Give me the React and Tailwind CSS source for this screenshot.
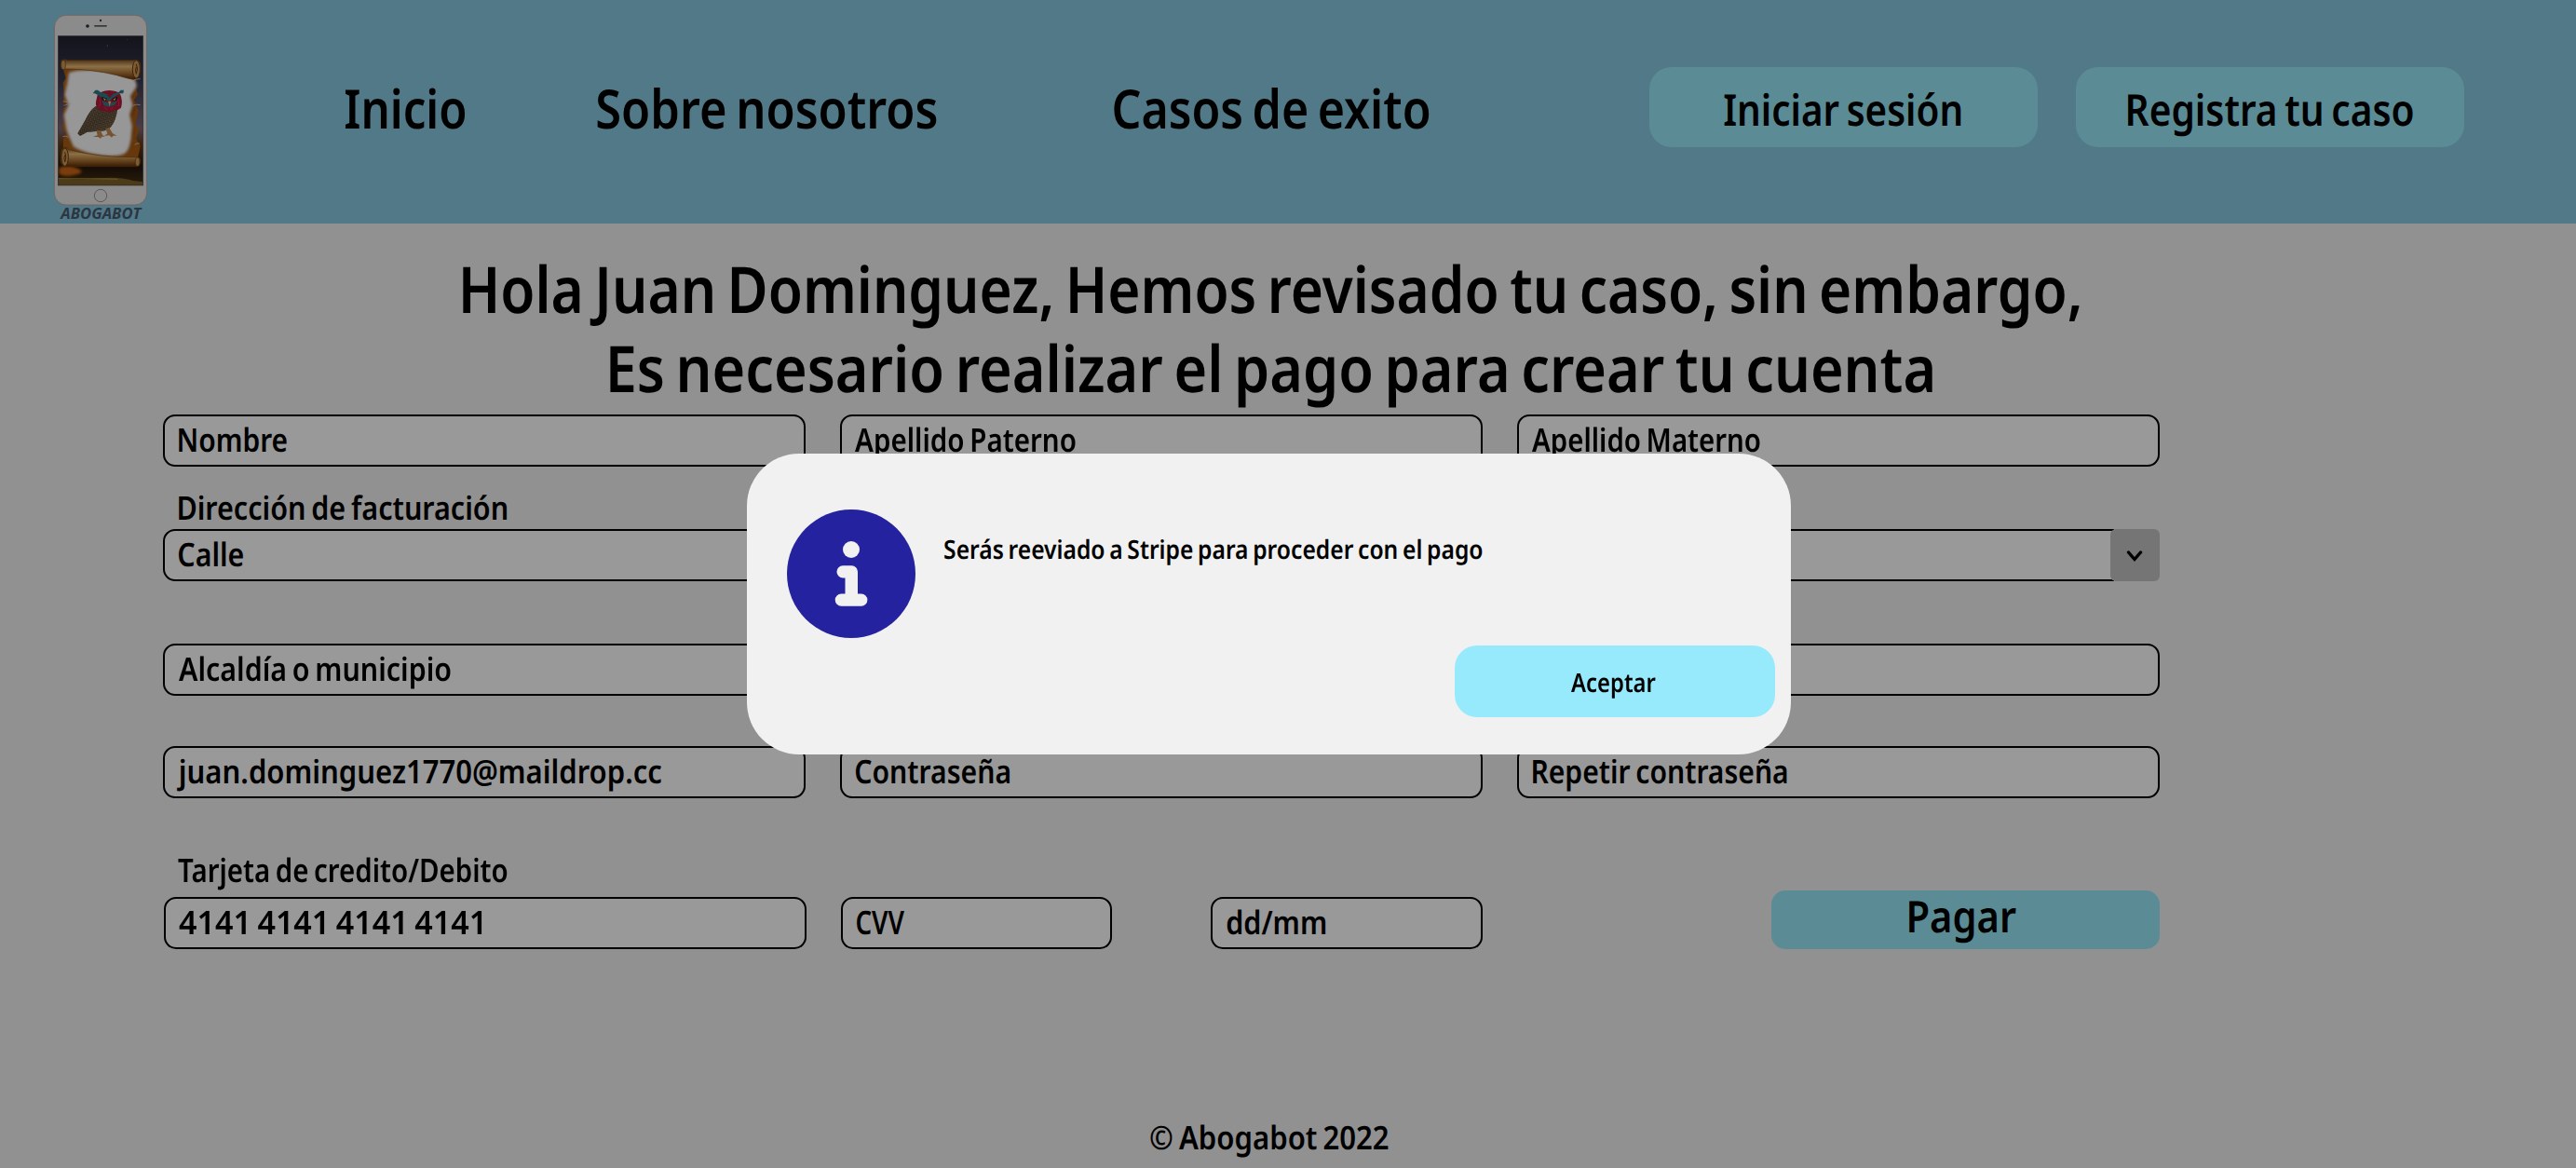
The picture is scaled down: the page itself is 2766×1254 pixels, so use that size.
import { useLayoutEffect, useRef } from "react";

const FAMILY = '"Noto Sans"';

// Condensed text: squeezes the glyphs so the drawn ink spans exactly `w` pixels.
function Fit({ w, className = "", children }) {
  const ref = useRef(null);
  useLayoutEffect(() => {
    const el = ref.current;
    const cs = getComputedStyle(el);
    const ctx = document.createElement("canvas").getContext("2d");
    ctx.font = `${cs.fontStyle} ${cs.fontWeight} ${cs.fontSize} ${FAMILY}`;
    ctx.textRendering = "geometricPrecision";
    const m = ctx.measureText(children);
    const left = m.actualBoundingBoxLeft;
    const bearings = m.width - left - m.actualBoundingBoxRight;
    const s = w / (el.offsetWidth - bearings);
    el.style.transform = `translateX(${left * s}px) scaleX(${s})`;
  }, [w, children]);
  return (
    <span className={"block shrink-0 " + className} style={{ width: w }}>
      <span ref={ref} className="inline-block origin-left whitespace-nowrap [text-rendering:geometricPrecision] [word-spacing:-0.07em]">
        {children}
      </span>
    </span>
  );
}

function Field({ text, w, className = "w-[690px]", pad = "pl-[15px]" }) {
  return (
    <div className={`flex h-14 shrink-0 items-center rounded-[13px] border-2 border-black bg-[#999999] pb-[2px] text-[35px] leading-[40px] ${pad} ${className}`}>
      {text ? <Fit w={w}>{text}</Fit> : null}
    </div>
  );
}

function Logo() {
  return (
    <svg width="140" height="240" viewBox="0 0 420 720" className="block shrink-0">
      <defs>
        <linearGradient id="sky" x1="0" y1="0" x2="0" y2="1">
          <stop offset="0" stopColor="#14141d" />
          <stop offset="0.3" stopColor="#22222f" />
          <stop offset="0.62" stopColor="#4a3c44" />
          <stop offset="0.72" stopColor="#3e230c" />
          <stop offset="0.88" stopColor="#150d06" />
          <stop offset="1" stopColor="#2a1d0c" />
        </linearGradient>
        <linearGradient id="roll" x1="0" y1="0" x2="0" y2="1">
          <stop offset="0" stopColor="#4b2f12" />
          <stop offset="0.35" stopColor="#8c7048" />
          <stop offset="0.65" stopColor="#6b4a22" />
          <stop offset="1" stopColor="#3a1c05" />
        </linearGradient>
        <linearGradient id="body" x1="0" y1="0" x2="1" y2="1">
          <stop offset="0" stopColor="#4d4033" />
          <stop offset="0.5" stopColor="#3b3024" />
          <stop offset="1" stopColor="#57432c" />
        </linearGradient>
        <filter id="soft" x="-10%" y="-10%" width="120%" height="120%">
          <feGaussianBlur stdDeviation="4" />
        </filter>
        <pattern id="plume" width="9" height="9" patternUnits="userSpaceOnUse" patternTransform="rotate(30)">
          <path d="M0 2h5M4 7h5" stroke="#201a14" strokeWidth="2.4" />
          <path d="M5 3h3M0 7h3" stroke="#6d5c46" strokeWidth="1.6" />
        </pattern>
      </defs>
      <rect x="55" y="49" width="298" height="611" rx="38" fill="#8b8b8b" stroke="#706764" strokeWidth="3" />
      <circle cx="204" cy="66" r="3.5" fill="#222" />
      <circle cx="162" cy="84" r="5.5" fill="#1b1b22" />
      <rect x="183" y="81" width="42" height="5" rx="2.5" fill="#3a3a3a" />
      <rect x="67" y="116" width="274" height="481" fill="url(#sky)" stroke="#2c2c30" strokeWidth="2" />
      <circle cx="226" cy="147" r="1.5" fill="#666" />
      <circle cx="290" cy="127" r="1.2" fill="#666" />
      <path d="M70 540q30-12 60 2t-12 22q-30 8-48-4z" fill="#7a3d08" filter="url(#soft)" />
      <path d="M69 574q70 6 130 0t110 8l30 4v10H69z" fill="#4c3b18" />
      <path d="M69 575h100l90 2" stroke="#7a6425" strokeWidth="3" fill="none" opacity="0.7" />
      <path d="M80 210 92 252l-9 14 4 40-5 24 16 8-14 12 2 46-6 14 14 18-10 20v66l240-4 8-40-14-24 10-30-12-18 10-42-14-34 12-18-10-30 8-34-10-14 6-30z" fill="#66380b" />
      <path d="M104 246q20-24 90-18 60 4 110 24 22 14 16 34l-14 30 10 30-14 36 8 40-8 44q-6 34-40 36-60 4-104-14-30-10-48-26-12-22-2-50l-14-34 4-50-12-16 10-20z" fill="#3f1d03" filter="url(#soft)" opacity="0.55" />
      <path d="M102 234q30-12 100-8 52 8 96 20 24 12 22 34l-20 30 8 28-10 32 8 36-4 44q-6 42-26 48-32 10-88 0-46-8-72-26-14-30-22-54l-8-48 14-32-12-32 8-36z" fill="#979797" filter="url(#soft)" />
      <path d="M78 194q10-5 20 0l210 0q22-6 24 16 2 40-16 46-16 0-60-14-80-20-168-20-10 0-12-8z" fill="url(#roll)" stroke="#4a2c0c" strokeWidth="2" />
      <ellipse cx="319" cy="223" rx="12" ry="29" fill="#7b5c33" stroke="#3e220a" strokeWidth="3" />
      <path d="M319 206q7 16 0 32-5-14 0-22" fill="none" stroke="#3e220a" strokeWidth="3" />
      <ellipse cx="84" cy="209" rx="7" ry="15" fill="#7b5c33" stroke="#3e220a" strokeWidth="2" />
      <path d="M78 484q12-18 24-2 100 26 214 24 16-2 16 14 0 14-12 16H92q-18-2-16-24z" fill="url(#roll)" stroke="#4a2c0c" strokeWidth="2" />
      <ellipse cx="89" cy="506" rx="11" ry="29" fill="#7b5c33" stroke="#3e220a" strokeWidth="3" />
      <path d="M89 490q7 16 0 32-5-14 0-22" fill="none" stroke="#3e220a" strokeWidth="3" />
      <ellipse cx="323" cy="521" rx="7" ry="14" fill="#7b5c33" stroke="#3e220a" strokeWidth="2" />
      <path d="M85 326q16 2 24 8-12 2-24 6M82 440q10-4 18 2M332 254q-14 0-24 6M332 338q-12-4-24 2M330 462q-10-2-16 4" stroke="#8a8a8a" strokeWidth="2" fill="none" />
      <path d="M188 342q-20 14-34 46l-24 42 8 8 22-12 36-4q30 2 42-14 16-20 20-54l-30-16z" fill="url(#body)" />
      <path d="M188 342q-20 14-34 46l-24 42 8 8 22-12 36-4q30 2 42-14 16-20 20-54l-30-16z" fill="url(#plume)" />
      <path d="M190 421l4 14-14 6 16 0 8 5 4-6 10 0-8-6-6-14zM220 414l6 16-10 8 16-2 8 7 4-6 12 0-14-8-10-18z" fill="#76532f" />
      <path d="M194 306q10-14 38-15 28 1 36 14 8 20 2 42-12 10-22 8l-14 7-14-4-18-2q-16-12-13-28z" fill="#6a1024" />
      <path d="M200 318q6 14 0 26m58-26q8 12 4 24m-44 2 6 10m20-10-6 10" stroke="#8a1730" strokeWidth="3" fill="none" />
      <path d="M187 290l8 0 8 6 20 6 10 14 12-14 18-6 6-6 10 0-2 11-10 0-18 10-16 14-16-2-20-16-12-6-6 0zM208 324l18 6 7 10 6-10 18-4-8 12-18 6-16-4z" fill="#1c4a50" />
      <path d="M207 311l18 6-4 9-12-4zM259 311l-18 6 4 9 12-4z" fill="#15151a" />
      <path d="M212 315l10 5-5 4zM254 315l-10 5 5 4z" fill="#998222" />
      <path d="M228 326h10l-5 17z" fill="#8b7350" />
      <circle cx="204" cy="630" r="20" fill="#8b8b8b" stroke="#5b5856" strokeWidth="3" />
      <text x="76" y="705" textLength="258" lengthAdjust="spacingAndGlyphs" fontFamily="Open Sans, sans-serif" fontWeight="700" fontStyle="italic" fontSize="48" fill="#2c3542">ABOGABOT</text>
    </svg>
  );
}

export default function App() {
  return (
    <div className="relative h-[1254px] w-[2766px] overflow-hidden bg-[#919191] font-['Noto_Sans',sans-serif] font-semibold text-black">
      <header className="flex h-60 bg-[#527987] pl-10">
        <Logo />
        <nav className="flex pt-[76px] pl-[191px] text-[58px] leading-[80px]">
          <Fit w={128}>Inicio</Fit>
          <Fit w={365} className="ml-[142px]">Sobre nosotros</Fit>
          <Fit w={338} className="ml-[190px]">Casos de exito</Fit>
        </nav>
        <div className="flex gap-[41px] pt-[72px] pl-[237px] text-[47px] leading-[86px]">
          <button className="flex h-[86px] w-[417px] items-center rounded-[24px] bg-[#5b8c96] pt-[3px] pl-[80px]">
            <Fit w={255}>Iniciar sesión</Fit>
          </button>
          <button className="flex h-[86px] w-[417px] items-center rounded-[24px] bg-[#5b8c96] pt-[3px] pl-14">
            <Fit w={306}>Registra tu caso</Fit>
          </button>
        </div>
      </header>

      <h1 className="flex h-[198px] w-[2730px] flex-col items-center pt-[26px] text-[69px] leading-[86px]">
        <Fit w={1736} className="h-[85px]">Hola Juan Dominguez, Hemos revisado tu caso, sin embargo,</Fit>
        <Fit w={1420} className="h-[86px]">Es necesario realizar el pago para crear tu cuenta</Fit>
      </h1>

      <main className="mt-[7px] w-[2319px] pl-[175px]">
        <div className="flex gap-[37px]">
          <Field text="Nombre" w={116} />
          <Field text="Apellido Paterno" w={237} pad="pl-[14px]" />
          <Field text="Apellido Materno" w={245} pad="pl-[14px]" />
        </div>
        <div className="mt-6 h-[43px] pl-[17px] text-[35px] leading-[40px]">
          <Fit w={352}>Dirección de facturación</Fit>
        </div>
        <div className="flex gap-[37px]">
          <Field text="Calle" w={69} />
          <Field />
          <div className="flex w-[690px]">
            <div className="h-14 flex-1 rounded-l-[13px] border-y-2 border-l-2 border-black bg-[#999999]" />
            <div className="-ml-1 flex h-14 w-[53px] items-center justify-center rounded-[6px] bg-[#757575] pr-[2px] pt-px">
              <svg width="20" height="16" viewBox="0 0 20 16" fill="none" stroke="#000" strokeWidth="3.4" strokeLinecap="round">
                <path d="M3.500 4 10 11.500 16.500 4" />
              </svg>
            </div>
          </div>
        </div>
        <div className="mt-[67px] flex gap-[37px]">
          <Field text="Alcaldía o municipio" w={292} />
          <Field />
          <Field />
        </div>
        <div className="mt-[54px] flex gap-[37px]">
          <Field text="juan.dominguez1770@maildrop.cc" w={520} pad="pl-[13px]" />
          <Field text="Contraseña" w={165} />
          <Field text="Repetir contraseña" w={273} />
        </div>
        <div className="mt-[57px] h-[49px] pl-4 text-[35px] leading-[40px]">
          <Fit w={353}>Tarjeta de credito/Debito</Fit>
        </div>
        <div className="flex items-end pl-px">
          <Field text="4141 4141 4141 4141" w={325} pad="pl-[14px]" />
          <Field text="CVV" w={52} className="ml-[37px] w-[291px]" />
          <Field text="dd/mm" w={106} className="ml-[106px] w-[292px]" />
          <button className="-mt-2 ml-auto flex h-[63px] w-[417px] items-center rounded-[15px] bg-[#5b8c96] pb-[9px] pl-[148px] text-[47px] leading-[60px]">
            <Fit w={115}>Pagar</Fit>
          </button>
        </div>
      </main>

      <footer className="flex w-[2726px] justify-center pt-[180px] text-[35px] leading-[44px]">
        <Fit w={256}>© Abogabot 2022</Fit>
      </footer>

      <div role="dialog" className="absolute top-[487px] left-[802px] flex h-[323px] w-[1121px] rounded-[56px] bg-[#f1f1f1] pt-[60px] pl-[43px]">
        <svg width="138" height="138" viewBox="0 0 138 138" className="shrink-0">
          <circle cx="69" cy="69" r="69" fill="#2522a0" />
          <circle cx="69" cy="43" r="9" fill="#f1f1f1" />
          <path d="M60 60.3h9.500a6.500 6.500 0 0 1 6.500 6.500V90.500h3.800a6.500 6.500 0 0 1 0 13.200H58.300a6.500 6.500 0 0 1 0-13.200H62.500V73.400H60a6.500 6.500 0 0 1 0-13.100z" fill="#f1f1f1" />
        </svg>
        <div className="pt-[22px] pl-[31px] text-[28px] leading-[40px]">
          <Fit w={577}>Serás reeviado a Stripe para proceder con el pago</Fit>
        </div>
        <button className="absolute right-[17px] bottom-10 flex h-[77px] w-[344px] items-center rounded-[24px] bg-[#97eafc] pt-px pl-[125px] text-[28px] leading-[40px]">
          <Fit w={91}>Aceptar</Fit>
        </button>
      </div>
    </div>
  );
}
